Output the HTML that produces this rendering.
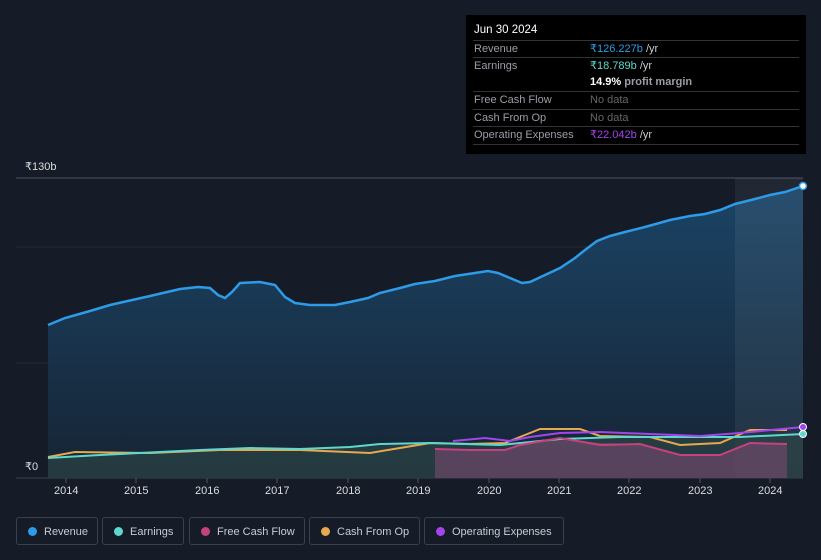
<!DOCTYPE html>
<html><head><style>
body{margin:0;background:#151b27;width:821px;height:560px;overflow:hidden;font-family:"Liberation Sans",sans-serif;position:relative}
.tt{position:absolute;left:466px;top:15px;width:340px;height:139px;background:#000;color:#fff;font-size:11px}
.tt .h{position:absolute;left:8px;top:9px;font-size:11.5px}
.row{position:absolute;left:7px;width:326px;border-top:1px solid #333;height:17px;line-height:17px}
.row span.l{position:absolute;left:1px;color:#9a9ea6}
.row span.v{position:absolute;left:117px;color:#8a8e96}
.lab{position:absolute;color:#ddd;font-size:11px}
.leg{position:absolute;top:517px;height:28px;border:1px solid #3a404c;border-radius:3px;color:#c9ccd2;font-size:11px;line-height:28px;box-sizing:border-box;padding-left:27px}
.leg i{position:absolute;left:11px;top:9px;width:9px;height:9px;border-radius:50%}
</style></head><body>
<svg width="821" height="560" style="position:absolute;left:0;top:0">
<defs><linearGradient id="g" x1="0" y1="0" x2="0" y2="1"><stop offset="0" stop-color="#1b4466"/><stop offset="1" stop-color="#162434"/></linearGradient></defs>
<line x1="16" y1="178" x2="803" y2="178" stroke="#4a5060" stroke-width="1"/>
<line x1="16" y1="247" x2="803" y2="247" stroke="#252c38"/>
<line x1="16" y1="363" x2="803" y2="363" stroke="#252c38"/>
<line x1="16" y1="478" x2="803" y2="478" stroke="#3a404c"/>
<path d="M48,325 L65,318 90,311 110,305 150,296 180,289 198,287 210,288 218,295 225,298 232,292 240,283 260,282 275,285 285,297 295,303 310,305 335,305 350,302 368,298 380,293 400,288 415,284 435,281 455,276 475,273 488,271 498,273 510,278 522,283 530,282 545,275 560,268 575,258 585,250 597,241 610,236 625,232 645,227 670,220 690,216 705,214 720,210 735,204 755,199 770,195 785,192 803,186 L803,478 L48,478Z" fill="url(#g)"/>
<rect x="735" y="178" width="68" height="300" fill="#ffffff" opacity="0.06"/>
<path d="M48,458 L100,455 200,450 300,449 350,447 400,444 450,442 500,443 560,440 620,437 680,437 740,437 803,434 L803,478 48,478Z" fill="#2f4a48" opacity="0.6"/>
<path d="M435,448 L470,450 505,450 520,445 560,438 600,443 640,444 680,455 720,455 750,443 787,444 L787,478 435,478Z" fill="#7a4a70" opacity="0.6"/>
<path d="M48,325 L65,318 90,311 110,305 150,296 180,289 198,287 210,288 218,295 225,298 232,292 240,283 260,282 275,285 285,297 295,303 310,305 335,305 350,302 368,298 380,293 400,288 415,284 435,281 455,276 475,273 488,271 498,273 510,278 522,283 530,282 545,275 560,268 575,258 585,250 597,241 610,236 625,232 645,227 670,220 690,216 705,214 720,210 735,204 755,199 770,195 785,192 803,186" fill="none" stroke="#2d9be8" stroke-width="2.5"/>
<path d="M48,457 L75,452 150,453 220,450 300,450 370,453 400,448 430,443 470,444 505,443 540,429 580,429 600,436 650,437 680,445 720,443 750,430 787,430" fill="none" stroke="#e8a94e" stroke-width="2"/>
<path d="M48,458 L100,455 200,450 250,448 300,449 350,447 380,444 430,443 500,445 560,439 620,437 680,437 740,437 803,434" fill="none" stroke="#5ed8cc" stroke-width="2"/>
<path d="M435,449 L470,450 505,450 520,445 560,438 600,445 640,444 680,455 720,455 750,443 787,444" fill="none" stroke="#c8417f" stroke-width="2"/>
<path d="M453,441 L485,438 510,441 530,437 560,433 600,432 650,434 700,436 740,433 803,427" fill="none" stroke="#a444ec" stroke-width="2"/>
<circle cx="803" cy="186" r="3.5" fill="#fff" stroke="#2d9be8" stroke-width="1.5"/>
<circle cx="803" cy="427" r="3.5" fill="#a444ec" stroke="#fff"/>
<circle cx="803" cy="434" r="3.5" fill="#5ed8cc" stroke="#fff"/>
<g stroke="#555" stroke-width="1">
<line x1="66" y1="478" x2="66" y2="483"/><line x1="136" y1="478" x2="136" y2="483"/><line x1="207" y1="478" x2="207" y2="483"/><line x1="277" y1="478" x2="277" y2="483"/><line x1="348" y1="478" x2="348" y2="483"/><line x1="418" y1="478" x2="418" y2="483"/><line x1="489" y1="478" x2="489" y2="483"/><line x1="559" y1="478" x2="559" y2="483"/><line x1="629" y1="478" x2="629" y2="483"/><line x1="700" y1="478" x2="700" y2="483"/><line x1="770" y1="478" x2="770" y2="483"/></g>
</svg>
<div class="lab" style="left:25px;top:160px">₹130b</div>
<div class="lab" style="left:25px;top:460px">₹0</div>
<div class="lab" style="left:54px;top:485px">2014</div><div class="lab" style="left:124px;top:485px">2015</div><div class="lab" style="left:195px;top:485px">2016</div><div class="lab" style="left:265px;top:485px">2017</div><div class="lab" style="left:336px;top:485px">2018</div><div class="lab" style="left:406px;top:485px">2019</div><div class="lab" style="left:477px;top:485px">2020</div><div class="lab" style="left:547px;top:485px">2021</div><div class="lab" style="left:617px;top:485px">2022</div><div class="lab" style="left:688px;top:485px">2023</div><div class="lab" style="left:758px;top:485px">2024</div>
<div class="tt"><div class="h">Jun 30 2024</div>
<div class="row" style="top:25px"><span class="l">Revenue</span><span class="v"><b style="font-weight:normal;color:#2d9be8">₹126.227b</b> <span style="color:#ccc">/yr</span></span></div>
<div class="row" style="top:42px"><span class="l">Earnings</span><span class="v"><b style="font-weight:normal;color:#5ed8cc">₹18.789b</b> <span style="color:#ccc">/yr</span></span></div>
<div class="row" style="top:59px;border:none"><span class="v"><b style="color:#fff">14.9%</b> <b style="color:#9a9ea6">profit margin</b></span></div>
<div class="row" style="top:76px"><span class="l">Free Cash Flow</span><span class="v" style="color:#666">No data</span></div>
<div class="row" style="top:94px"><span class="l">Cash From Op</span><span class="v" style="color:#666">No data</span></div>
<div class="row" style="top:111px"><span class="l">Operating Expenses</span><span class="v"><b style="font-weight:normal;color:#a444ec">₹22.042b</b> <span style="color:#ccc">/yr</span></span></div>
<div class="row" style="top:129px;height:0"></div>
</div>
<div class="leg" style="left:16px;width:82px"><i style="background:#2d9be8"></i>Revenue</div>
<div class="leg" style="left:102px;width:82px"><i style="background:#5ed8cc"></i>Earnings</div>
<div class="leg" style="left:189px;width:116px"><i style="background:#c8417f"></i>Free Cash Flow</div>
<div class="leg" style="left:309px;width:111px"><i style="background:#e8a94e"></i>Cash From Op</div>
<div class="leg" style="left:424px;width:140px"><i style="background:#a444ec"></i>Operating Expenses</div>
</body></html>
